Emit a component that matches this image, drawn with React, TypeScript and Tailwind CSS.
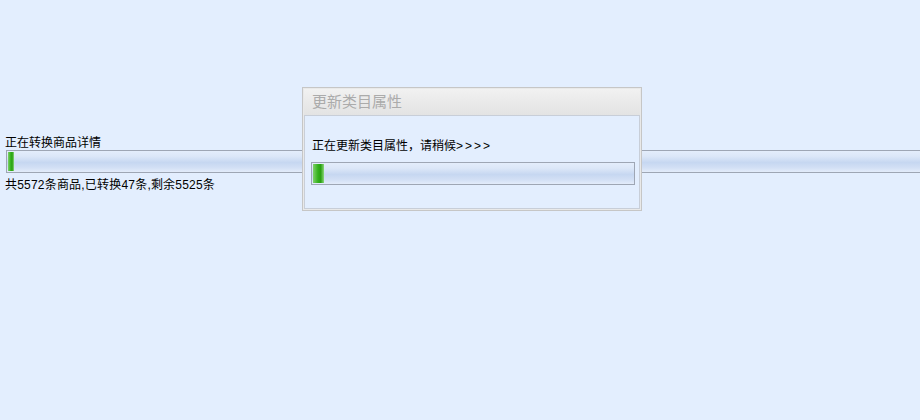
import React from 'react';

const font = {
    fontFamily: '"Liberation Sans", "Noto Sans CJK SC", sans-serif',
};

function ProgressBar({ percent, className }: { percent: number; className?: string }) {
    return (
        <div
            className={`relative h-[23px] border border-[#9ea6b4] bg-[linear-gradient(to_bottom,#e4edfb_0%,#dce7f8_25%,#c6d7f1_55%,#d3e0f5_80%,#e3ecfa_100%)] ${className ?? ''}`}
        >
            <div
                className="absolute left-px top-px bottom-px bg-[linear-gradient(to_right,#7fd06a_0%,#34b21c_45%,#2aa012_70%,#8ad77a_100%)]"
                style={{ width: `${percent}%` }}
            />
        </div>
    );
}

export default function App() {
    return (
        <div
            className="relative h-[420px] w-[920px] overflow-hidden bg-[#e3eefe] text-[12px] leading-[14px] text-black"
            style={font}
        >
            <div className="pt-[136px] pl-[5px]">
                <div className="h-[14px]">正在转换商品详情</div>
                <ProgressBar percent={0.7} className="ml-px w-[930px]" />
                <div className="mt-[5px] tracking-[0.2px]">共5572条商品,已转换47条,剩余5525条</div>
            </div>

            {/* 弹出层 */}
            <div className="absolute left-[302px] top-[87px] w-[340px] border border-[#c6c6c6] bg-[#e9e9e9] p-px">
                <div className="flex h-[26px] items-center bg-[linear-gradient(to_bottom,#f1f1f1,#e3e3e3)] px-[8px] text-[15px] text-[#ababab]">
                    更新类目属性
                </div>
                <div className="h-[94px] border border-[#c8ced8] bg-[#e3eefe] px-[6px] pt-[23px]">
                    <div className="h-[14px] pl-px">
                        正在更新类目属性，请稍候
                        <span className="tracking-[2px]">&gt;&gt;&gt;&gt;</span>
                    </div>
                    <ProgressBar percent={3.5} className="mt-[9px] w-[324px] border-[#8fa3b8]" />
                </div>
            </div>
        </div>
    );
}
